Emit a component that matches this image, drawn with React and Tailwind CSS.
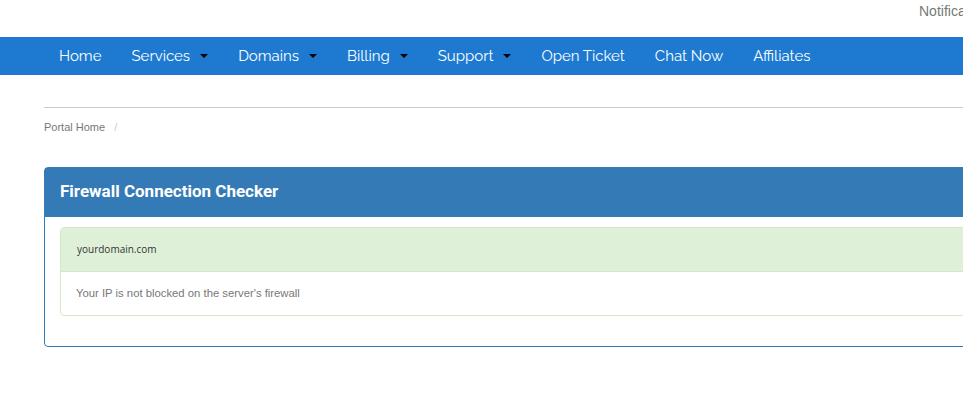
const navItems = [
  { label: 'Home' },
  { label: 'Services', caret: true },
  { label: 'Domains', caret: true },
  { label: 'Billing', caret: true },
  { label: 'Support', caret: true },
  { label: 'Open Ticket' },
  { label: 'Chat Now' },
  { label: 'Affiliates' },
]

function Caret() {
  return (
    <span className="ml-[10px] inline-block h-0 w-0 border-x-[4px] border-t-[4px] border-x-transparent border-t-black" />
  )
}

export default function App() {
  return (
    <div className="w-[963px] min-h-[398px] overflow-hidden bg-white font-['Liberation_Sans',Arial,sans-serif]">
      <header className="h-[37px]">
        <div className="ml-[919px] w-[200px] whitespace-nowrap pt-[1px] text-[14px] text-[#777]">
          Notifications
        </div>
      </header>

      <nav className="h-[38px] w-full bg-[#1d7ad0]">
        <ul className="ml-[44px] flex h-full items-center whitespace-nowrap font-['Raleway',Lato,sans-serif] text-[15px] text-white">
          {navItems.map((item) => (
            <li key={item.label} className="flex items-center px-[15px]">
              {item.label}
              {item.caret && <Caret />}
            </li>
          ))}
        </ul>
      </nav>

      <div className="ml-[44px] w-[1140px]">
        <div className="mt-[32px] border-t border-[#ccc]" />
        <div className="mt-[11px] text-[11px] text-[#777]">
          <span>Portal Home</span>
          <span className="pl-[9px] text-[#ccc]">/</span>
        </div>

        <div className="mt-[31px] rounded-[4px] border border-[#337ab7]">
          <div className="flex h-[49px] items-center bg-[#337ab7] px-[15px] font-['Roboto',sans-serif] text-[17px] font-bold text-white">
            Firewall Connection Checker
          </div>
          <div className="px-[15px] pb-[30px] pt-[10px]">
            <div className="rounded-[4px] border border-[#d6e9c6]">
              <div className="flex h-[44px] items-center border-b border-[#d6e9c6] bg-[#dff0d8] px-[16px] font-['Open_Sans',sans-serif] text-[10px] text-[#333]">
                yourdomain.com
              </div>
              <div className="flex h-[43px] items-center px-[15px] text-[11.3px] text-[#777]">
                Your IP is not blocked on the server's firewall
              </div>
            </div>
          </div>
        </div>
      </div>
    </div>
  )
}
